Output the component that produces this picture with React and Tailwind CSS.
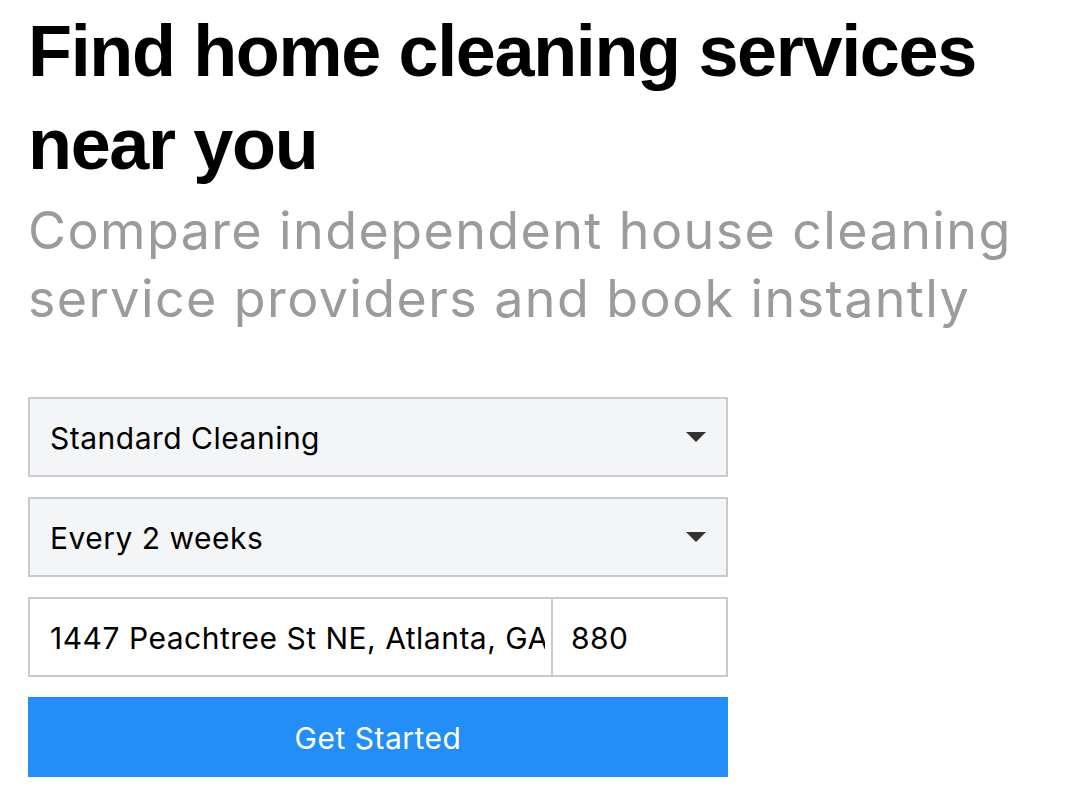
import React from "react";

function Caret() {
  return (
    <svg width="20" height="10" viewBox="0 0 20 10" className="shrink-0">
      <path d="M0 0 L20 0 L10 10 Z" fill="#333333" />
    </svg>
  );
}

function SelectBox({ label }) {
  return (
    <div className="flex h-[80px] w-[700px] items-center justify-between border-2 border-[#c8cacf] bg-[#f4f5f7] pl-[20px] pr-[20px]">
      <span className="pt-[2px] text-[30px] tracking-[0.5px] text-black">{label}</span>
      <Caret />
    </div>
  );
}

export default function App() {
  const inter = { fontFamily: "Inter, 'Noto Sans', sans-serif" };
  return (
    <div className="min-h-[798px] w-[1068px] bg-white pl-[28px] pr-[20px] pt-[5px]">
      <h1
        className="text-[72px] font-bold leading-[93px] tracking-[-1.35px] text-black"
        style={{ fontFamily: "'Liberation Sans', Arial, sans-serif" }}
      >
        Find home cleaning services
        <br />
        near you
      </h1>
      <p
        className="mt-[6px] text-[52px] leading-[68px] tracking-[1.4px] text-[#9b9b9b]"
        style={inter}
      >
        Compare independent house cleaning
        <br />
        service providers and book instantly
      </p>
      <div className="mt-[64px] flex flex-col gap-[20px]" style={inter}>
        <SelectBox label="Standard Cleaning" />
        <SelectBox label="Every 2 weeks" />
        <div className="flex h-[80px] w-[700px] border-2 border-[#c8cacf] bg-white">
          <input
            readOnly
            value="1447 Peachtree St NE, Atlanta, GA 30309"
            className="h-full w-[523px] min-w-0 border-r-2 border-[#c8cacf] bg-white pl-[20px] pr-[6px] pt-[2px] text-[30px] tracking-[0.5px] text-black outline-none"
          />
          <input
            readOnly
            value="880"
            className="h-full min-w-0 flex-1 bg-white pl-[18px] pt-[2px] text-[30px] tracking-[0.5px] text-black outline-none"
          />
        </div>
        <button className="flex h-[80px] w-[700px] items-center justify-center bg-[#248ef8] pt-[2px] text-[30px] tracking-[0.5px] text-white">
          Get Started
        </button>
      </div>
    </div>
  );
}
